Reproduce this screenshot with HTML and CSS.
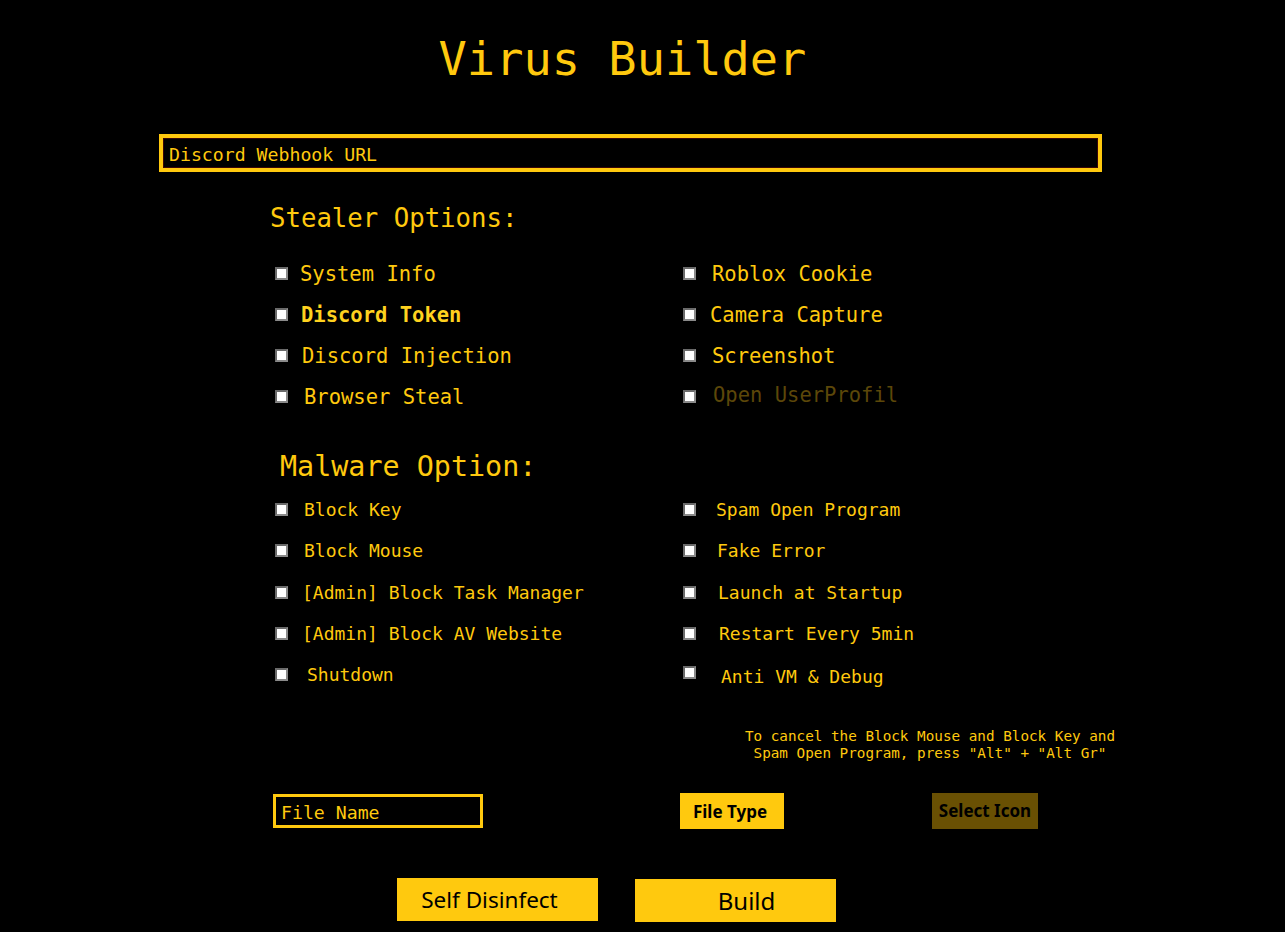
FILE: index.html
```html
<!DOCTYPE html>
<html lang="en">
<head>
<meta charset="utf-8">
<title>Virus Builder</title>
<link rel="stylesheet" href="styles.css">
</head>
<body>
<main class="app">
  <h1 class="title">Virus Builder</h1>

  <div class="webhook"><span class="placeholder">Discord Webhook URL</span></div>

  <h2 class="section-title stealer-title">Stealer Options:</h2>
  <div class="options stealer">
    <label class="opt"><span class="box"></span><span class="lbl l0">System Info</span></label>
    <label class="opt right"><span class="box"></span><span class="lbl r1">Roblox Cookie</span></label>
    <label class="opt"><span class="box"></span><span class="lbl l1 strong">Discord Token</span></label>
    <label class="opt right"><span class="box"></span><span class="lbl r0">Camera Capture</span></label>
    <label class="opt"><span class="box"></span><span class="lbl l2">Discord Injection</span></label>
    <label class="opt right"><span class="box"></span><span class="lbl r1">Screenshot</span></label>
    <label class="opt"><span class="box"></span><span class="lbl l3">Browser Steal</span></label>
    <label class="opt right"><span class="box"></span><span class="lbl r2 disabled">Open UserProfil</span></label>
  </div>

  <h2 class="section-title malware-title">Malware Option:</h2>
  <div class="options malware">
    <label class="opt"><span class="box"></span><span class="lbl m2">Block Key</span></label>
    <label class="opt right"><span class="box"></span><span class="lbl n0">Spam Open Program</span></label>
    <label class="opt"><span class="box"></span><span class="lbl m2">Block Mouse</span></label>
    <label class="opt right"><span class="box"></span><span class="lbl n1">Fake Error</span></label>
    <label class="opt"><span class="box"></span><span class="lbl m0">[Admin] Block Task Manager</span></label>
    <label class="opt right"><span class="box"></span><span class="lbl n2">Launch at Startup</span></label>
    <label class="opt"><span class="box"></span><span class="lbl m0">[Admin] Block AV Website</span></label>
    <label class="opt right"><span class="box"></span><span class="lbl n3">Restart Every 5min</span></label>
    <label class="opt"><span class="box"></span><span class="lbl m5">Shutdown</span></label>
    <label class="opt right"><span class="box"></span><span class="lbl n5">Anti VM &amp; Debug</span></label>
  </div>

  <p class="note">To cancel the Block Mouse and Block Key and<br>Spam Open Program, press "Alt" + "Alt Gr"</p>

  <div class="file-row">
    <div class="filename"><span class="placeholder">File Name</span></div>
    <button class="btn small file-type">File Type</button>
    <button class="btn small select-icon">Select Icon</button>
  </div>

  <div class="action-row">
    <button class="btn big disinfect">Self Disinfect</button>
    <button class="btn big build">Build</button>
  </div>
</main>
</body>
</html>
```

FILE: styles.css
```css
html, body {
  margin: 0;
  padding: 0;
  background: #000;
}

body {
  width: 1285px;
  height: 932px;
  overflow: hidden;
  font-family: "DejaVu Sans Mono", "Liberation Mono", monospace;
  color: #ffc90e;
}

.app {
  display: flex;
  flex-direction: column;
  padding-top: 31px;
}

.title {
  margin: 0;
  font-size: 47px;
  line-height: 56px;
  font-weight: normal;
  text-align: center;
  color: #ffc90e;
  padding-right: 40px;
}

.webhook {
  margin: 47px 0 0 159px;
  width: 943px;
  height: 38px;
  box-sizing: border-box;
  border: 4px solid #ffc90e;
  box-shadow: inset 0 0 0 1px #3a0606;
  display: flex;
  align-items: center;
  padding: 2px 0 0 6px;
}

.placeholder {
  font-size: 18.2px;
  color: #ffc90e;
}

.section-title {
  margin: 0;
  font-weight: normal;
  color: #ffc90e;
}

.stealer-title {
  margin: 31px 0 0 270px;
  font-size: 25.7px;
  line-height: 30px;
}

.malware-title {
  margin: 33px 0 0 280px;
  font-size: 28.4px;
  line-height: 34px;
}

.options {
  display: grid;
  grid-template-columns: 408px 400px;
  margin-left: 275px;
}

.stealer {
  margin-top: 20px;
  grid-auto-rows: 41px;
}

.malware {
  margin-top: 5px;
  grid-auto-rows: 41.3px;
}

.opt {
  display: flex;
  align-items: center;
  white-space: nowrap;
}

.box {
  width: 13px;
  height: 13px;
  box-sizing: border-box;
  background: #fff;
  border: 2px solid #8a8a8a;
  border-top-color: #6a6a6a;
  border-left-color: #6a6a6a;
  flex: none;
}

.stealer .lbl {
  font-size: 20.5px;
}

.malware .lbl {
  font-size: 18px;
}

.lbl { color: #ffc90e; }

.l0 { margin-left: 12px; }
.l1 { margin-left: 13px; }
.l2 { margin-left: 14px; }
.l3 { margin-left: 16px; }
.r0 { margin-left: 14px; }
.r1 { margin-left: 16px; }
.r2 { margin-left: 17px; }

.m0 { margin-left: 14px; }
.m2 { margin-left: 16px; }
.m5 { margin-left: 19px; }
.n0 { margin-left: 20px; }
.n1 { margin-left: 21px; }
.n2 { margin-left: 22px; }
.n3 { margin-left: 23px; }
.n5 { margin-left: 25px; }

.malware .opt:nth-child(10) .box { position: relative; top: -2px; }
.malware .opt:nth-child(10) .lbl { position: relative; top: 2px; }

.strong {
  font-weight: bold;
  color: #ffd21f;
}

.disabled {
  color: #5c4709;
  position: relative;
  top: -2px;
}

.note {
  margin: 33px 0 0 740px;
  width: 380px;
  font-size: 14.3px;
  line-height: 17px;
  text-align: center;
  white-space: nowrap;
  color: #ffc90e;
}

.file-row {
  display: flex;
  align-items: center;
  margin: 31px 0 0 273px;
  height: 36px;
}

.filename {
  width: 210px;
  height: 34px;
  box-sizing: border-box;
  border: 3px solid #ffc90e;
  display: flex;
  align-items: center;
  padding: 3px 0 0 5px;
}

.btn {
  border: none;
  margin: 0;
  padding: 0;
  font-family: "Noto Sans", "Open Sans", sans-serif;
  color: #000;
  cursor: pointer;
}

.small {
  height: 36px;
  font-size: 17px;
  font-weight: bold;
}

.file-type {
  margin-left: 197px;
  width: 104px;
  background: #ffc90e;
  padding-right: 4px;
}

.select-icon {
  margin-left: 148px;
  width: 106px;
  background: #695003;
  padding-bottom: 2px;
}

.action-row {
  display: flex;
  align-items: flex-start;
  margin: 49px 0 0 397px;
  gap: 37px;
}

.big {
  width: 201px;
  height: 43px;
  background: #ffc90e;
  font-size: 22.5px;
}

.disinfect {
  padding-right: 16px;
}

.build {
  margin-top: 1px;
  font-size: 24px;
  padding-left: 22px;
}
```
